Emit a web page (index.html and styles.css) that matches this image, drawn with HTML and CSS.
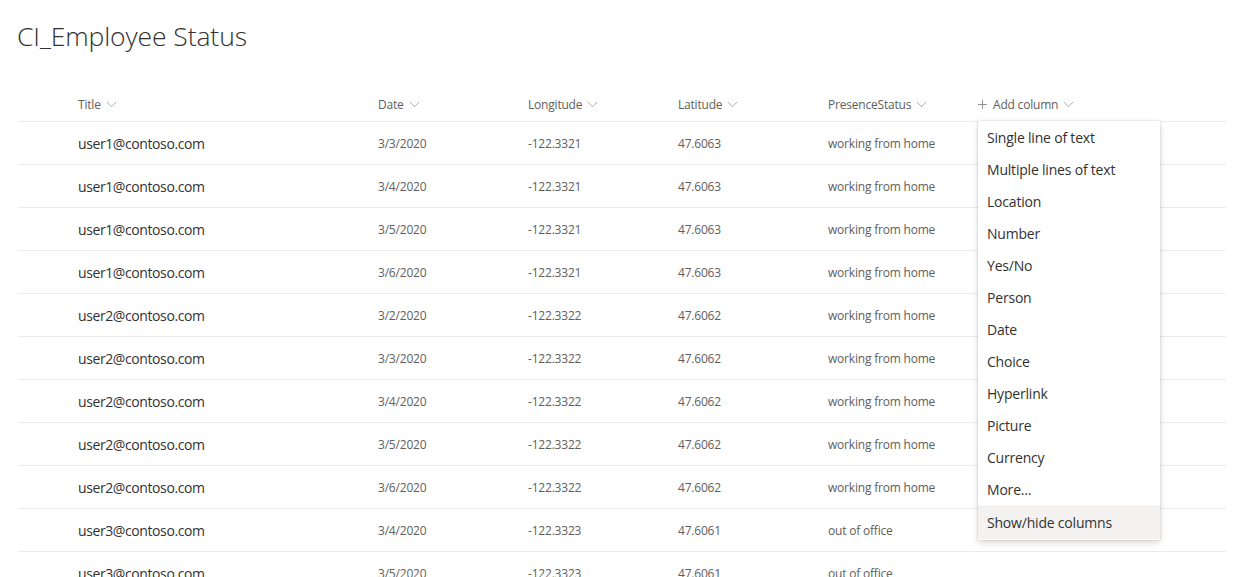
FILE: index.html
```html
<!DOCTYPE html>
<html>
<head>
<meta charset="utf-8">
<link rel="stylesheet" href="styles.css">
</head>
<body>
<div class="page">
  <h1 class="title">CI_Employee Status</h1>
  <div class="list">
    <div class="row header">
      <div class="cell"></div>
      <div class="cell hcell">Title <svg class="chev" viewBox="0 0 12 8"><path d="M0.5 1 L6 6.5 L11.5 1"/></svg></div>
      <div class="cell hcell">Date <svg class="chev" viewBox="0 0 12 8"><path d="M0.5 1 L6 6.5 L11.5 1"/></svg></div>
      <div class="cell hcell">Longitude <svg class="chev" viewBox="0 0 12 8"><path d="M0.5 1 L6 6.5 L11.5 1"/></svg></div>
      <div class="cell hcell">Latitude <svg class="chev" viewBox="0 0 12 8"><path d="M0.5 1 L6 6.5 L11.5 1"/></svg></div>
      <div class="cell hcell">PresenceStatus <svg class="chev" viewBox="0 0 12 8"><path d="M0.5 1 L6 6.5 L11.5 1"/></svg></div>
      <div class="cell hcell add"><svg class="plus" viewBox="0 0 10 10"><path d="M5 0 V10 M0 5 H10"/></svg> Add column <svg class="chev" viewBox="0 0 12 8"><path d="M0.5 1 L6 6.5 L11.5 1"/></svg></div>
    </div>

    <div class="row"><div class="cell"></div><div class="cell ttl">user1@contoso.com</div><div class="cell">3/3/2020</div><div class="cell">-122.3321</div><div class="cell">47.6063</div><div class="cell">working from home</div><div class="cell"></div></div>
    <div class="row"><div class="cell"></div><div class="cell ttl">user1@contoso.com</div><div class="cell">3/4/2020</div><div class="cell">-122.3321</div><div class="cell">47.6063</div><div class="cell">working from home</div><div class="cell"></div></div>
    <div class="row"><div class="cell"></div><div class="cell ttl">user1@contoso.com</div><div class="cell">3/5/2020</div><div class="cell">-122.3321</div><div class="cell">47.6063</div><div class="cell">working from home</div><div class="cell"></div></div>
    <div class="row"><div class="cell"></div><div class="cell ttl">user1@contoso.com</div><div class="cell">3/6/2020</div><div class="cell">-122.3321</div><div class="cell">47.6063</div><div class="cell">working from home</div><div class="cell"></div></div>
    <div class="row"><div class="cell"></div><div class="cell ttl">user2@contoso.com</div><div class="cell">3/2/2020</div><div class="cell">-122.3322</div><div class="cell">47.6062</div><div class="cell">working from home</div><div class="cell"></div></div>
    <div class="row"><div class="cell"></div><div class="cell ttl">user2@contoso.com</div><div class="cell">3/3/2020</div><div class="cell">-122.3322</div><div class="cell">47.6062</div><div class="cell">working from home</div><div class="cell"></div></div>
    <div class="row"><div class="cell"></div><div class="cell ttl">user2@contoso.com</div><div class="cell">3/4/2020</div><div class="cell">-122.3322</div><div class="cell">47.6062</div><div class="cell">working from home</div><div class="cell"></div></div>
    <div class="row"><div class="cell"></div><div class="cell ttl">user2@contoso.com</div><div class="cell">3/5/2020</div><div class="cell">-122.3322</div><div class="cell">47.6062</div><div class="cell">working from home</div><div class="cell"></div></div>
    <div class="row"><div class="cell"></div><div class="cell ttl">user2@contoso.com</div><div class="cell">3/6/2020</div><div class="cell">-122.3322</div><div class="cell">47.6062</div><div class="cell">working from home</div><div class="cell"></div></div>
    <div class="row"><div class="cell"></div><div class="cell ttl">user3@contoso.com</div><div class="cell">3/4/2020</div><div class="cell">-122.3323</div><div class="cell">47.6061</div><div class="cell">out of office</div><div class="cell"></div></div>
    <div class="row"><div class="cell"></div><div class="cell ttl">user3@contoso.com</div><div class="cell">3/5/2020</div><div class="cell">-122.3323</div><div class="cell">47.6061</div><div class="cell">out of office</div><div class="cell"></div></div>

    <div class="menu">
      <div class="item">Single line of text</div>
      <div class="item">Multiple lines of text</div>
      <div class="item">Location</div>
      <div class="item">Number</div>
      <div class="item">Yes/No</div>
      <div class="item">Person</div>
      <div class="item">Date</div>
      <div class="item">Choice</div>
      <div class="item">Hyperlink</div>
      <div class="item">Picture</div>
      <div class="item">Currency</div>
      <div class="item">More...</div>
      <div class="divider"></div>
      <div class="item active">Show/hide columns</div>
    </div>
  </div>
</div>
</body>
</html>
```

FILE: styles.css
```css
html, body {
  margin: 0;
  padding: 0;
  background: #ffffff;
  overflow: hidden;
}
body {
  font-family: "Open Sans", "Noto Sans", sans-serif;
  color: #323130;
}
.page {
  width: 1239px;
  height: 577px;
  overflow: hidden;
}
.title {
  margin: 0;
  padding: 19px 0 0 17px;
  height: 62px;
  box-sizing: border-box;
  font-size: 26.5px;
  font-weight: 300;
  line-height: 34px;
  color: #323130;
  letter-spacing: -0.1px;
}
.list {
  position: relative;
  margin-left: 18px;
  width: 1208px;
}
.row {
  display: grid;
  grid-template-columns: 60px 300px 150px 150px 150px 150px 1fr;
  height: 43px;
  border-bottom: 1px solid #edebe9;
  box-sizing: border-box;
  align-items: center;
}
.header {
  height: 43px;
  margin-top: 17px;
  padding-top: 8px;
  border-bottom: 1px solid #edebe9;
}
.cell {
  font-size: 12px;
  color: #605e5c;
  white-space: nowrap;
  letter-spacing: -0.2px;
}
.hcell {
  display: flex;
  align-items: center;
  gap: 4px;
  color: #605e5c;
  font-size: 12px;
}
.ttl {
  font-size: 14px;
  color: #323130;
  letter-spacing: -0.4px;
}
.chev {
  width: 11px;
  height: 7px;
  fill: none;
  stroke: #a19f9d;
  stroke-width: 1;
  margin-left: 1px;
}
.plus {
  width: 9px;
  height: 9px;
  fill: none;
  stroke: #8a8886;
  stroke-width: 1;
  margin-right: 2px;
}
.menu {
  position: absolute;
  left: 960px;
  top: 42px;
  width: 182px;
  background: #ffffff;
  box-shadow: 0 0 2px rgba(0,0,0,0.18), 0 3px 7px rgba(0,0,0,0.14);
  padding: 1px 0 1px;
}
.item {
  height: 32px;
  line-height: 32px;
  padding-left: 9px;
  font-size: 14px;
  color: #323130;
  letter-spacing: -0.2px;
}
.divider {
  height: 1px;
  background: #edebe9;
}
.item.active {
  background: #f3f2f1;
}
```
